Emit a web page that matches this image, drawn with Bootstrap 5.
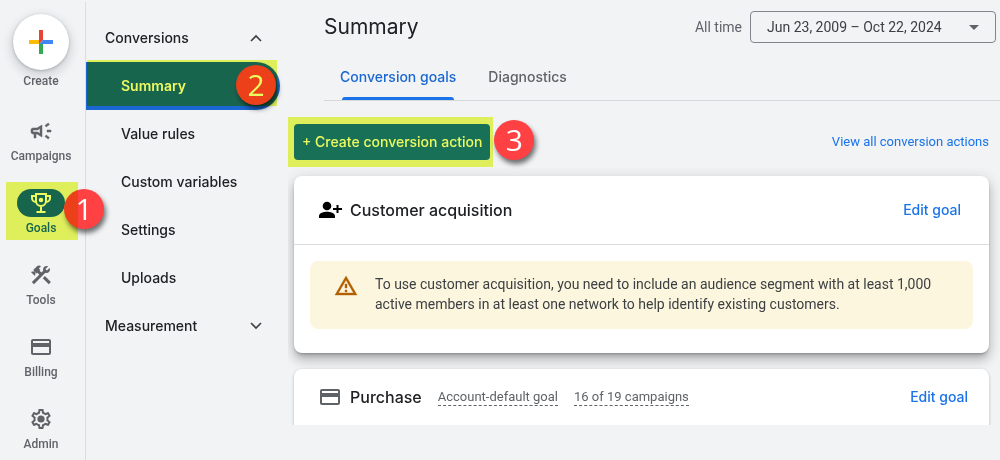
<!DOCTYPE html>
<html lang="en">
<head>
<meta charset="utf-8">
<meta name="viewport" content="width=device-width, initial-scale=1">
<title>Conversions summary</title>
<link href="https://cdn.jsdelivr.net/npm/bootstrap@5.3.0/dist/css/bootstrap.min.css" rel="stylesheet">
<style>
  :root { --blue: #1a73e8; --blue-deep: #1a67d2; --ink: #202124; --muted: #5f6368; --line: #dadce0; --marker: #ecfa5f; }
  body { background: #f1f3f5; color: var(--ink); font-family: Roboto, sans-serif; font-size: 14px; line-height: 20px; }
  a { text-decoration: none; }
  svg { display: block; flex: none; }
  .display-face { font-family: Inter, Roboto, sans-serif; }

  /* Left icon rail */
  .rail { width: 86px; flex: none; border-right: 1px solid var(--line); padding: 12px 3px 0 0; margin-top: 2px; }
  .rail-item { flex: none; height: 72px; width: 72px; padding-top: 7px; color: var(--muted); font-size: 12px; font-weight: 500; line-height: 16px; }
  .rail-create { height: 96px; padding: 0; border: 0; background: none; }
  .fab { width: 56px; height: 56px; background: #fff; box-shadow: 0 1px 3px rgba(60,64,67,.3), 0 4px 8px 3px rgba(60,64,67,.15); margin-bottom: 3px; }
  .pill { width: 48px; height: 28px; border-radius: 14px; margin-bottom: 3px; }
  .rail-item.current { color: var(--blue-deep); }
  .current .pill { background: var(--blue-deep); color: #fff; }

  /* Section navigation */
  .side { width: 202px; flex: none; padding-top: 14px; font-weight: 500; }
  .side-row { height: 48px; padding: 0 16px 0 19px; color: var(--ink); font-size: 14px; border: 0; background: none; width: 100%; }
  .side-sub { padding-left: 35px; }
  .side-sub.current { width: 194px; background: var(--blue-deep); color: #fff; border-radius: 0 24px 24px 0; font-weight: 600; }

  /* Highlighter marks and numbered steps */
  .marked { position: relative; }
  .marked::after { content: ""; position: absolute; background: var(--marker); mix-blend-mode: multiply; z-index: 3; pointer-events: none; }
  .rail-item.marked::after { inset: 0 -1px 14px 1px; }
  .side-sub.marked::after { inset: -2px 3px 4px 1px; }
  .marked.btn-create::after { inset: -7px -3px -7px -6px; }
  .step { position: absolute; z-index: 2; width: 40px; height: 40px; border-radius: 50%; background: #ff4144; color: #fff; font: 400 30px/40px "Open Sans", sans-serif; text-align: center; box-shadow: 2px 4px 5px rgba(0,0,0,.55); }
  .rail-item .step { right: -27px; top: 7px; }
  .side-sub .step { right: 4px; top: 3px; }
  .btn-create .step { right: -44px; top: -4px; }

  /* Main column */
  .page-title { font-size: 21px; line-height: 28px; font-weight: 400; }
  .top-bar { flex: none; height: 54px; padding: 0 4px 0 36px; }
  .range-label { color: var(--muted); }
  .range { width: 246px; height: 32px; padding: 0 40px 0 16px; border: 1px solid #80868b; border-radius: 4px; color: #3c4043; font: 400 14px/20px Roboto, sans-serif; background-color: transparent; background-image: url("data:image/svg+xml,%3Csvg xmlns='http://www.w3.org/2000/svg' viewBox='0 0 10 5'%3E%3Cpath fill='%235f6368' d='M0 0h10L5 5z'/%3E%3C/svg%3E"); background-position: right 16px center; background-size: 10px 5px; }
  .tab-row { flex: none; margin-left: 36px; padding: 0 16px; height: 47px; border-bottom: 1px solid #d5d7da; }
  .tab-link { position: relative; color: var(--muted); font-weight: 500; height: 46px; }
  .tab-link.current { color: var(--blue-deep); }
  .tab-link.current::after { content: ""; position: absolute; left: 2px; right: 2px; bottom: 0; height: 3px; border-radius: 3px 3px 0 0; background: var(--blue); }
  .action-row { flex: none; padding: 23px 11px 8px 6px; }
  .btn-create { height: 36px; padding: 0 8px; border: 0; border-radius: 4px; background: var(--blue); color: #fff; font-size: 14px; font-weight: 500; }
  .view-all { color: var(--blue); font-size: 13px; }
  .goal-list { min-height: 0; overflow: hidden; padding: 8px 11px 0 6px; margin-bottom: 35px; gap: 16px; }
  .goal-card { flex: none; background: #fff; border-radius: 8px; box-shadow: 0 1px 3px rgba(60,64,67,.35); }
  .goal-card.raised { box-shadow: 0 5px 5px -3px rgba(0,0,0,.2), 0 8px 10px 1px rgba(0,0,0,.12), 0 3px 14px 2px rgba(0,0,0,.12), 0 1px 2px rgba(0,0,0,.15); padding-bottom: 24px; }
  .goal-head { height: 69px; padding: 0 28px 0 24px; border-bottom: 1px solid var(--line); }
  .goal-head.flat { height: 72px; padding: 0 21px 16px 24px; border: 0; }
  .goal-title { font-size: 16px; line-height: 24px; font-weight: 500; }
  .goal-edit { color: var(--blue); font-weight: 500; }
  .goal-meta { color: var(--muted); font-size: 13px; line-height: 16px; border-bottom: 1px dashed var(--muted); }
  .notice { margin: 16px 16px 0; padding: 13px 24px 15px; gap: 17px; background: #fdf6df; border-radius: 8px; color: #3c4043; }
</style>
</head>
<body>
<div class="d-flex vh-100 overflow-hidden">
  <nav class="rail d-flex flex-column align-items-center" aria-label="Main">
    <button type="button" class="rail-item rail-create d-flex flex-column align-items-center">
      <span class="fab rounded-circle d-flex align-items-center justify-content-center">
        <svg width="24" height="24" viewBox="0 0 24 24"><path fill="#ea4335" d="M10 0h4v10l-4 4z"/><path fill="#fbbc04" d="M0 10h10v4H0z"/><path fill="#34a853" d="M10 14l4-2v12h-4z"/><path fill="#4285f4" d="M14 10h10v4H10z"/></svg>
      </span>
      <span>Create</span>
    </button>
    <a href="#" class="rail-item d-flex flex-column align-items-center">
      <span class="pill d-flex align-items-center justify-content-center"><svg width="24" height="24" viewBox="0 0 24 24" fill="currentColor" stroke="currentColor" stroke-width=".5"><path d="M18 11v2h4v-2h-4zm-2 6.610c.96.71 2.210 1.650 3.200 2.390.4-.53.8-1.070 1.200-1.600-.99-.74-2.240-1.680-3.200-2.400-.4.54-.8 1.080-1.200 1.610zM20.400 5.600c-.4-.53-.8-1.070-1.200-1.600-.99.74-2.240 1.680-3.200 2.400.4.53.8 1.070 1.200 1.600.96-.72 2.210-1.650 3.200-2.400zM4 9c-1.100 0-2 .9-2 2v2c0 1.100.9 2 2 2h1v4h2v-4h1l5 3V6L8 9H4zm5.030 1.710L11 9.530v4.940l-1.970-1.180-.48-.29H4v-2h4.550l.48-.29z"/></svg></span>
      <span>Campaigns</span>
    </a>
    <a href="#" class="rail-item current marked d-flex flex-column align-items-center" aria-current="page">
      <span class="pill d-flex align-items-center justify-content-center"><svg width="24" height="24" viewBox="0 0 24 24" fill="none" stroke="currentColor" stroke-width="2"><path d="M7 3h10v7a5 5 0 0 1-10 0zM7 5H3v2a4 4 0 0 0 4 4M17 5h4v2a4 4 0 0 1-4 4M12 15v6M7.500 21h9"/><circle cx="12" cy="9" r="2.300" fill="currentColor" stroke="none"/></svg></span>
      <span>Goals</span>
      <span class="step">1</span>
    </a>
    <a href="#" class="rail-item d-flex flex-column align-items-center">
      <span class="pill d-flex align-items-center justify-content-center"><svg width="24" height="24" viewBox="0 0 24 24" fill="currentColor"><path d="m13.783 15.172 2.121-2.121 5.996 5.996-2.121 2.121zM17.500 10c1.930 0 3.500-1.570 3.500-3.500 0-.58-.16-1.120-.41-1.600l-2.700 2.700-1.490-1.490 2.700-2.700c-.48-.25-1.020-.41-1.600-.41C15.570 3 14 4.570 14 6.500c0 .41.08.8.21 1.160l-1.850 1.850-1.780-1.780.71-.71-1.410-1.410L12 3.490c-1.170-1.170-3.070-1.170-4.240 0L4.220 7.030l1.410 1.410H2.810l-.71.71 3.540 3.540.71-.71V9.150l1.410 1.410.71-.71 1.780 1.780-7.410 7.410 2.120 2.120L16.340 9.790c.36.13.75.21 1.160.21z"/></svg></span>
      <span>Tools</span>
    </a>
    <a href="#" class="rail-item d-flex flex-column align-items-center">
      <span class="pill d-flex align-items-center justify-content-center"><svg width="24" height="24" viewBox="0 0 24 24" fill="currentColor"><path d="M20 4H4c-1.110 0-1.990.89-1.990 2L2 18c0 1.110.89 2 2 2h16c1.110 0 2-.89 2-2V6c0-1.110-.89-2-2-2zm0 14H4v-6h16v6zm0-10H4V6h16v2z"/></svg></span>
      <span>Billing</span>
    </a>
    <a href="#" class="rail-item d-flex flex-column align-items-center">
      <span class="pill d-flex align-items-center justify-content-center"><svg width="24" height="24" viewBox="0 0 24 24" fill="currentColor"><path d="M19.430 12.980c.04-.32.07-.64.07-.98 0-.34-.03-.66-.07-.98l2.110-1.650c.19-.15.24-.42.12-.64l-2-3.460c-.09-.16-.26-.25-.44-.25-.06 0-.12.01-.17.03l-2.490 1c-.52-.4-1.080-.73-1.690-.98l-.38-2.650C14.460 2.180 14.250 2 14 2h-4c-.25 0-.46.18-.49.42l-.38 2.650c-.61.25-1.170.59-1.690.98l-2.490-1c-.06-.02-.12-.03-.18-.03-.17 0-.34.09-.43.25l-2 3.460c-.13.22-.07.49.12.64l2.110 1.650c-.04.32-.07.65-.07.98 0 .33.03.66.07.98l-2.110 1.650c-.19.15-.24.42-.12.64l2 3.460c.09.16.26.25.44.25.06 0 .12-.01.17-.03l2.490-1c.52.4 1.080.73 1.690.98l.38 2.650c.03.24.24.42.49.42h4c.25 0 .46-.18.49-.42l.38-2.650c.61-.25 1.170-.59 1.690-.98l2.490 1c.06.02.12.03.18.03.17 0 .34-.09.43-.25l2-3.460c.12-.22.07-.49-.12-.64l-2.110-1.650zm-1.980-1.710c.04.31.05.52.05.73 0 .21-.02.43-.05.73l-.14 1.130.89.7 1.080.84-.7 1.210-1.270-.51-1.040-.42-.9.68c-.43.32-.84.56-1.250.73l-1.060.43-.16 1.130-.2 1.350h-1.400l-.19-1.350-.16-1.130-1.060-.43c-.43-.18-.83-.41-1.230-.71l-.91-.7-1.060.43-1.270.51-.7-1.210 1.080-.84.89-.7-.14-1.130c-.03-.31-.05-.54-.05-.74s.02-.43.05-.73l.14-1.130-.89-.7-1.080-.84.7-1.210 1.270.51 1.040.42.9-.68c.43-.32.84-.56 1.250-.73l1.060-.43.16-1.130.2-1.350h1.390l.19 1.350.16 1.130 1.060.43c.43.18.83.41 1.230.71l.91.7 1.060-.43 1.270-.51.7 1.210-1.070.85-.89.7.14 1.130z"/><circle cx="12" cy="12" r="3.600"/></svg></span>
      <span>Admin</span>
    </a>
  </nav>

  <nav class="side display-face" aria-label="Goals">
    <button type="button" class="side-row fw-medium d-flex align-items-center justify-content-between" aria-expanded="true">Conversions
      <svg width="30" height="12" viewBox="0 0 30 12" fill="none" stroke="#3c4043" stroke-width="1.600"><path d="M9 9l5-5 5 5"/></svg></button>
    <a href="#" class="side-row side-sub current marked d-flex align-items-center" aria-current="page">Summary<span class="step">2</span></a>
    <a href="#" class="side-row side-sub d-flex align-items-center">Value rules</a>
    <a href="#" class="side-row side-sub d-flex align-items-center">Custom variables</a>
    <a href="#" class="side-row side-sub d-flex align-items-center">Settings</a>
    <a href="#" class="side-row side-sub d-flex align-items-center">Uploads</a>
    <button type="button" class="side-row fw-medium d-flex align-items-center justify-content-between" aria-expanded="false">Measurement
      <svg width="30" height="12" viewBox="0 0 30 12" fill="none" stroke="#3c4043" stroke-width="1.600"><path d="M9 3l5 5 5-5"/></svg></button>
  </nav>

  <main class="d-flex flex-column flex-grow-1">
    <div class="top-bar d-flex align-items-center justify-content-between">
      <h1 class="page-title display-face mb-0">Summary</h1>
      <div class="d-flex align-items-center gap-2">
        <label for="range" class="range-label">All time</label>
        <select id="range" class="form-select range"><option>Jun 23, 2009 – Oct 22, 2024</option></select>
      </div>
    </div>
    <div class="tab-row display-face d-flex">
      <a href="#" class="tab-link current d-flex align-items-center me-4" aria-current="true">Conversion goals</a>
      <a href="#" class="tab-link d-flex align-items-center ms-2">Diagnostics</a>
    </div>
    <div class="action-row d-flex align-items-center justify-content-between">
      <button type="button" class="btn-create marked display-face">+ Create conversion action<span class="step">3</span></button>
      <a href="#" class="view-all">View all conversion actions</a>
    </div>
    <div class="goal-list d-flex flex-column flex-grow-1">
      <section class="goal-card raised">
        <div class="goal-head d-flex align-items-center">
          <svg class="me-2" width="24" height="18" viewBox="0 0 24 18" fill="#000"><circle cx="9" cy="5" r="4.300"/><path d="M1 17v-2c0-3 5-4.300 8-4.300s8 1.300 8 4.300v2zM18.500 4h2v3H24v2h-3.500v3h-2V9H15V7h3.500z"/></svg>
          <h2 class="goal-title display-face mb-0">Customer acquisition</h2>
          <a href="#" class="goal-edit display-face ms-auto">Edit goal</a>
        </div>
        <div class="notice d-flex">
          <svg width="24" height="24" viewBox="0 0 24 24" fill="#b06000" stroke="#b06000" stroke-width=".4"><path d="M12 5.990 19.530 19H4.470zM12 2 1 21h22zm1 14h-2v2h2zm0-6h-2v4h2z" fill-rule="evenodd"/></svg>
          <p class="mb-0">To use customer acquisition, you need to include an audience segment with at least 1,000 active members in at least one network to help identify existing customers.</p>
        </div>
      </section>
      <section class="goal-card">
        <div class="goal-head flat d-flex align-items-center">
          <svg class="me-2" width="24" height="24" viewBox="0 0 24 24" fill="#5f6368"><path d="M20 4H4c-1.110 0-1.990.89-1.990 2L2 18c0 1.110.89 2 2 2h16c1.110 0 2-.89 2-2V6c0-1.110-.89-2-2-2zm0 14H4v-6h16v6zm0-10H4V6h16v2z"/></svg>
          <h2 class="goal-title display-face mb-0 me-3">Purchase</h2>
          <span class="goal-meta me-3">Account-default goal</span>
          <span class="goal-meta">16 of 19 campaigns</span>
          <a href="#" class="goal-edit display-face ms-auto">Edit goal</a>
        </div>
      </section>
    </div>
  </main>
</div>
<script src="https://cdn.jsdelivr.net/npm/bootstrap@5.3.0/dist/js/bootstrap.bundle.min.js"></script>
</body>
</html>
